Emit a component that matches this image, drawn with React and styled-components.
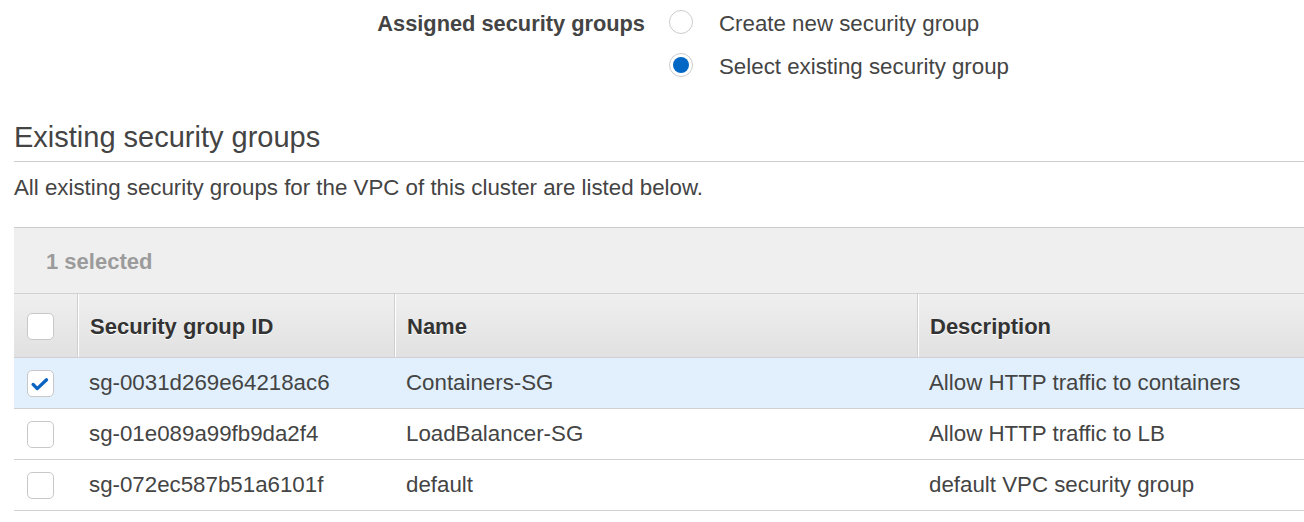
import React from "react";
import styled, { createGlobalStyle } from "styled-components";

const Global = createGlobalStyle`
  html, body { margin: 0; padding: 0; background: #fff; }
  body { font-family: "Liberation Sans", Arial, Helvetica, sans-serif; color: #444; }
`;

const Page = styled.div`
  padding: 0 0 0 14px;
  width: 1290px;
`;

const AssignGrid = styled.div`
  display: grid;
  grid-template-columns: 631px auto;
  grid-template-rows: 46px 40px;
  column-gap: 24px;
  align-items: center;
`;

const FieldLabel = styled.div`
  font-weight: bold;
  font-size: 21.8px;
  color: #444;
  text-align: right;
  padding-top: 2px;
`;

const Option = styled.label`
  grid-column: 2;
  display: flex;
  align-items: center;
  gap: 26px;
  font-size: 22.3px;
  color: #444;
  padding-top: 2px;
`;

const Radio = styled.span`
  width: 24px;
  height: 24px;
  box-sizing: border-box;
  border-radius: 50%;
  border: 1px solid #ccc;
  background: #fff;
  display: flex;
  align-items: center;
  justify-content: center;
  margin-top: ${(p) => (p.$first ? "-5px" : "-4px")};
  &::after {
    content: "";
    width: 16px;
    height: 16px;
    border-radius: 50%;
    background: #0067c5;
    display: ${(p) => (p.$checked ? "block" : "none")};
  }
`;

const Heading = styled.h2`
  margin: 35px 0 0 0;
  font-size: 29px;
  font-weight: normal;
  color: #444;
  line-height: 33px;
  padding-bottom: 7px;
  border-bottom: 1px solid #ccc;
`;

const Intro = styled.p`
  margin: 0;
  padding: 12px 0 0;
  font-size: 22.3px;
  line-height: 28px;
  height: 53px;
  color: #444;
`;

const Table = styled.div`
  border-top: 1px solid #ccc;
`;

const SelBar = styled.div`
  height: 66px;
  background: #efefef;
  border-bottom: 1px solid #d2d2d2;
  display: flex;
  align-items: center;
  padding-left: 32px;
  padding-top: 2px;
  box-sizing: border-box;
  font-weight: bold;
  font-size: 22px;
  color: #9b9b9b;
`;

const Row = styled.div`
  display: grid;
  grid-template-columns: 63px 317px 523px 1fr;
  height: ${(p) => (p.$head ? "63px" : "50px")};
  border-bottom: 1px solid #d0d0d0;
  background: ${(p) =>
    p.$head
      ? "linear-gradient(#efefef, #e1e1e1)"
      : p.$selected
      ? "#e1f0fc"
      : "#fff"};
`;

const Cell = styled.div`
  display: flex;
  align-items: center;
  padding-left: ${(p) => (p.$check ? "13px" : "12px")};
  font-size: 22.3px;
  color: #444;
  ${(p) =>
    p.$head &&
    `
    font-weight: bold;
    color: #333;
    text-shadow: 0 1px 0 #fff;
    font-size: 22px;
    padding-top: 2px;
  `}
  ${(p) =>
    p.$head && p.$divider &&
    `
    border-left: 1px solid #cfcfcf;
    box-shadow: inset 1px 0 0 #fff;
  `}
`;

const Box = styled.span`
  width: 27px;
  height: 27px;
  box-sizing: border-box;
  border: 1px solid #c8c8c8;
  border-radius: 5px;
  background: #fff;
  display: flex;
  align-items: center;
  justify-content: center;
`;

const Check = () => (
  <svg width="27" height="27" viewBox="0 0 27 27">
    <path
      d="M5.5 14.5 L10 19 L20 9.5"
      fill="none"
      stroke="#0a63c0"
      strokeWidth="3.6"
      strokeLinecap="round"
      strokeLinejoin="round"
    />
  </svg>
);

const rows = [
  { id: "sg-0031d269e64218ac6", name: "Containers-SG", desc: "Allow HTTP traffic to containers", sel: true },
  { id: "sg-01e089a99fb9da2f4", name: "LoadBalancer-SG", desc: "Allow HTTP traffic to LB", sel: false },
  { id: "sg-072ec587b51a6101f", name: "default", desc: "default VPC security group", sel: false },
];

export default function App() {
  return (
    <Page>
      <Global />
      <AssignGrid>
        <FieldLabel>Assigned security groups</FieldLabel>
        <Option>
          <Radio $first />
          Create new security group
        </Option>
        <Option>
          <Radio $checked />
          Select existing security group
        </Option>
      </AssignGrid>
      <Heading>Existing security groups</Heading>
      <Intro>All existing security groups for the VPC of this cluster are listed below.</Intro>
      <Table>
        <SelBar>1 selected</SelBar>
        <Row $head>
          <Cell $head $check>
            <Box />
          </Cell>
          <Cell $head $divider>Security group ID</Cell>
          <Cell $head $divider>Name</Cell>
          <Cell $head $divider>Description</Cell>
        </Row>
        {rows.map((r) => (
          <Row key={r.id} $selected={r.sel}>
            <Cell $check>
              <Box>{r.sel && <Check />}</Box>
            </Cell>
            <Cell>{r.id}</Cell>
            <Cell>{r.name}</Cell>
            <Cell>{r.desc}</Cell>
          </Row>
        ))}
      </Table>
    </Page>
  );
}
